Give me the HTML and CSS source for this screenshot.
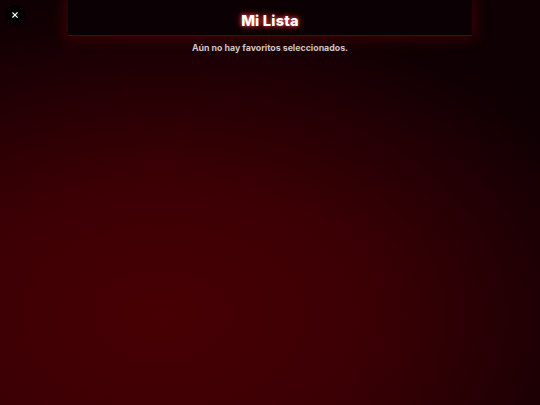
FILE: index.html
```html
<!DOCTYPE html>
<html lang="es">
<head>
<meta charset="utf-8">
<title>Mi Lista</title>
<link rel="stylesheet" href="styles.css">
</head>
<body>
<div class="page">
  <button class="close" aria-label="Cerrar">
    <svg viewBox="0 0 10 10" width="6" height="6"><path d="M1.5 1.5 L8.5 8.5 M8.5 1.5 L1.5 8.5" stroke="#fff" stroke-width="2" stroke-linecap="square"/></svg>
  </button>
  <header class="header">
    <h1 class="title">Mi Lista</h1>
  </header>
  <p class="empty">Aún no hay favoritos seleccionados.</p>
</div>
</body>
</html>
```
FILE: styles.css
```css
* { box-sizing: border-box; }
html, body { margin: 0; height: 100%; }
body {
  font-family: Inter, "Open Sans", sans-serif;
  background: radial-gradient(ellipse 500px 330px at 30% 78%, #470004 0%, #3c0004 40%, #220004 72%, #110003 92%, #0e0003 100%);
  background-color: #0e0003;
  overflow: hidden;
}
.page {
  position: relative;
  height: 100%;
  display: flex;
  flex-direction: column;
  align-items: center;
}
.close {
  position: absolute;
  left: 5px;
  top: 5px;
  width: 20px;
  height: 20px;
  border-radius: 50%;
  border: none;
  padding: 0;
  background: #000;
  display: flex;
  align-items: center;
  justify-content: center;
}
.header {
  width: 404px;
  height: 36px;
  background: #0b0003;
  border-bottom: 1px solid #5a0008;
  box-shadow: 0 0 14px 3px rgba(120, 0, 10, 0.45);
  display: flex;
  align-items: center;
  justify-content: center;
}
.title {
  margin: 0;
  padding-top: 6px;
  font-size: 14.6px;
  font-weight: 800;
  color: #fff;
  letter-spacing: 0.2px;
  text-shadow: 0 0 4px rgba(255, 90, 90, 0.9), 0 0 8px rgba(255, 40, 40, 0.7);
}
.empty {
  margin: 6px 0 0;
  font-size: 8.8px;
  font-weight: 700;
  color: #cfc7c7;
}
```
